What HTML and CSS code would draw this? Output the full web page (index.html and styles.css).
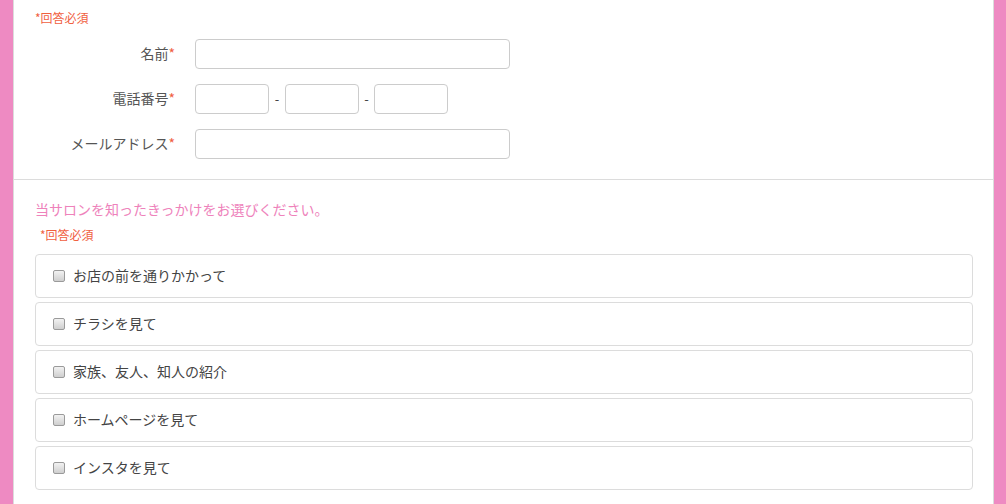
FILE: index.html
```html
<!doctype html>
<html lang="ja">
<head>
  <meta charset="utf-8" />
  <link rel="stylesheet" href="styles.css">
</head>
<body>
  <div class="page">
    <section class="contact">
      <p class="required">*回答必須</p>
      <div class="row">
        <label class="label">名前<span class="star">*</span></label>
        <input class="field wide" type="text">
      </div>
      <div class="row">
        <label class="label">電話番号<span class="star">*</span></label>
        <input class="field tel" type="text">
        <span class="dash">-</span>
        <input class="field tel" type="text">
        <span class="dash dash-last">-</span>
        <input class="field tel" type="text">
      </div>
      <div class="row">
        <label class="label">メールアドレス<span class="star">*</span></label>
        <input class="field wide" type="text">
      </div>
    </section>

    <section class="question">
      <h2 class="q-title">当サロンを知ったきっかけをお選びください。</h2>
      <p class="required q-req">*回答必須</p>
      <div class="options">
        <label class="option"><span class="check"></span>お店の前を通りかかって</label>
        <label class="option"><span class="check"></span>チラシを見て</label>
        <label class="option"><span class="check"></span>家族、友人、知人の紹介</label>
        <label class="option"><span class="check"></span>ホームページを見て</label>
        <label class="option"><span class="check"></span>インスタを見て</label>
      </div>
    </section>
  </div>
</body>
</html>
```

FILE: styles.css
```css
:root {
  --pink: #ee8ac2;
  --accent: #f0603f;
  --line: #dcdcdc;
  --text: #555;
}

html, body {
  height: 100%;
}

body {
  margin: 0;
  background: var(--pink);
  font-family: "Noto Sans CJK JP", "Noto Sans", sans-serif;
  color: var(--text);
  overflow: hidden;
}

.page {
  margin: 0 12px 0 13px;
  min-height: 100%;
  background: #fff;
  border-left: 1px solid var(--line);
  border-right: 1px solid var(--line);
}

.required {
  margin: 0;
  font-size: 12px;
  line-height: 16px;
  color: var(--accent);
}

.contact {
  padding: 10px 20px 20px 21px;
  border-bottom: 1px solid var(--line);
}

.row {
  display: flex;
  align-items: center;
  margin-top: 13px;
}

.row + .row {
  margin-top: 15px;
}

.label {
  width: 140px;
  padding: 0 20px 3px 0;
  text-align: right;
  font-size: 14px;
  line-height: 20px;
  color: var(--text);
}

.star {
  color: var(--accent);
}

.field {
  box-sizing: border-box;
  height: 30px;
  border: 1px solid #ccc;
  border-radius: 4px;
  background: #fff;
  padding: 4px 8px;
  font-size: 14px;
}

.wide {
  width: 315px;
}

.tel {
  width: 74px;
}

.dash {
  width: 16px;
  padding-bottom: 2px;
  text-align: center;
  font-size: 13px;
  color: #444;
}

.dash-last {
  width: 15px;
}

.question {
  padding: 19px 20px 0 21px;
}

.q-title {
  margin: 0;
  font-size: 14px;
  font-weight: normal;
  line-height: 20px;
  color: #ee82bb;
}

.q-req {
  margin: 8px 0 0 5px;
}

.options {
  display: flex;
  flex-direction: column;
  gap: 4px;
  margin-top: 11px;
}

.option {
  display: flex;
  align-items: center;
  box-sizing: border-box;
  height: 44px;
  padding: 0 0 2px 17px;
  border: 1px solid var(--line);
  border-radius: 4px;
  font-size: 14px;
  color: #444;
}

.check {
  box-sizing: border-box;
  width: 12px;
  height: 12px;
  margin: 2px 8px 0 0;
  border: 1px solid #9a9a9a;
  border-radius: 2px;
  background: linear-gradient(#f2f2f2, #cfcfcf);
}
```
